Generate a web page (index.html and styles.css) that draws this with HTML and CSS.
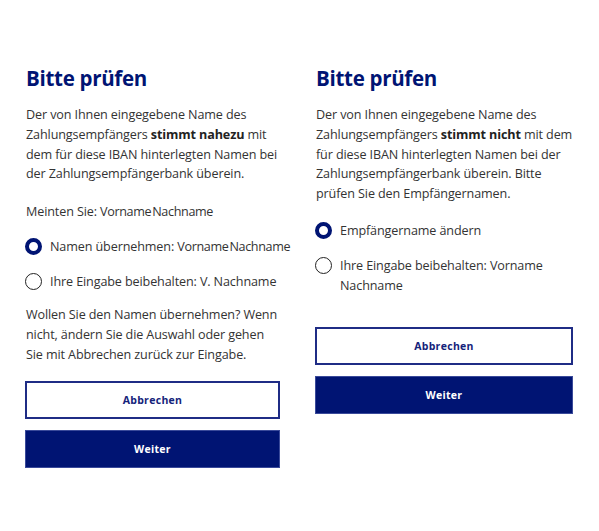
FILE: index.html
```html
<!DOCTYPE html>
<html lang="de">
<head>
<meta charset="utf-8">
<title>Bitte prüfen</title>
<link rel="stylesheet" href="styles.css">
</head>
<body>
<main class="page">
  <section class="panel panel-left">
    <h1 class="title">Bitte prüfen</h1>
    <p class="text">Der von Ihnen eingegebene Name des<br>Zahlungsempfängers <strong>stimmt nahezu</strong> mit<br>dem für diese IBAN hinterlegten Namen bei<br>der Zahlungsempfängerbank überein.</p>
    <p class="text suggestion">Meinten Sie: <span class="name">Vorname Nachname</span></p>
    <div class="radios">
      <label class="radio"><span class="dot checked"></span><span class="label">Namen übernehmen: <span class="name">Vorname Nachname</span></span></label>
      <label class="radio"><span class="dot"></span><span class="label">Ihre Eingabe beibehalten: V. Nachname</span></label>
    </div>
    <p class="text question">Wollen Sie den Namen übernehmen? Wenn<br>nicht, ändern Sie die Auswahl oder gehen<br>Sie mit Abbrechen zurück zur Eingabe.</p>
    <div class="actions">
      <button class="btn btn-secondary">Abbrechen</button>
      <button class="btn btn-primary">Weiter</button>
    </div>
  </section>
  <section class="panel panel-right">
    <h1 class="title">Bitte prüfen</h1>
    <p class="text">Der von Ihnen eingegebene Name des<br>Zahlungsempfängers <strong>stimmt nicht</strong> mit dem<br>für diese IBAN hinterlegten Namen bei der<br>Zahlungsempfängerbank überein. Bitte<br>prüfen Sie den Empfängernamen.</p>
    <div class="radios">
      <label class="radio"><span class="dot checked"></span><span class="label">Empfängername ändern</span></label>
      <label class="radio"><span class="dot"></span><span class="label">Ihre Eingabe beibehalten: Vorname<br>Nachname</span></label>
    </div>
    <div class="actions">
      <button class="btn btn-secondary">Abbrechen</button>
      <button class="btn btn-primary">Weiter</button>
    </div>
  </section>
</main>
</body>
</html>
```
FILE: styles.css
```css
* { box-sizing: border-box; }
html, body { margin: 0; padding: 0; background: #fff; }
body {
  font-family: "Open Sans", "Noto Sans", sans-serif;
  color: #333;
}
.page {
  display: grid;
  grid-template-columns: 255px 258px;
  column-gap: 35px;
  padding: 64px 0 0 25px;
}
.panel { display: flex; flex-direction: column; }
.title {
  margin: 0 0 13px 1px;
  font-size: 20.5px;
  line-height: 28px;
  font-weight: 700;
  color: #001473;
  letter-spacing: -0.3px;
}
.text {
  margin: 0 0 0 1px;
  font-size: 12.6px;
  line-height: 19.8px;
  letter-spacing: -0.12px;
  white-space: nowrap;
}
.text strong { font-weight: 700; color: #222; }
.name { letter-spacing: -0.35px; word-spacing: -2px; }
.suggestion { margin-top: 18px; }
.radios {
  display: flex;
  flex-direction: column;
  gap: 15px;
  margin-top: 15px;
}
.panel-right .radios { margin-top: 17px; }
.radio {
  display: flex;
  align-items: flex-start;
  gap: 8px;
  font-size: 12.6px;
  line-height: 20px;
  letter-spacing: -0.12px;
  white-space: nowrap;
}
.dot {
  flex: none;
  width: 17px;
  height: 17px;
  margin-top: 1.5px;
  border-radius: 50%;
  border: 1.6px solid #222;
  background: #fff;
}
.dot.checked {
  border: 4.5px solid #001473;
}
.question { margin-top: 13px; }
.actions {
  display: flex;
  flex-direction: column;
  gap: 11px;
  margin-top: 17px;
}
.panel-right .actions { margin-top: 31px; }
.btn {
  height: 38px;
  width: 100%;
  font-family: inherit;
  font-size: 10.5px;
  font-weight: 700;
  letter-spacing: 0.3px;
  cursor: pointer;
  border-radius: 0;
}
.btn-secondary {
  background: #fff;
  color: #14237a;
  border: 2px solid #1f2c85;
}
.btn-primary {
  background: #001473;
  color: #fff;
  border: 1px solid #3a4a9a;
}
```
